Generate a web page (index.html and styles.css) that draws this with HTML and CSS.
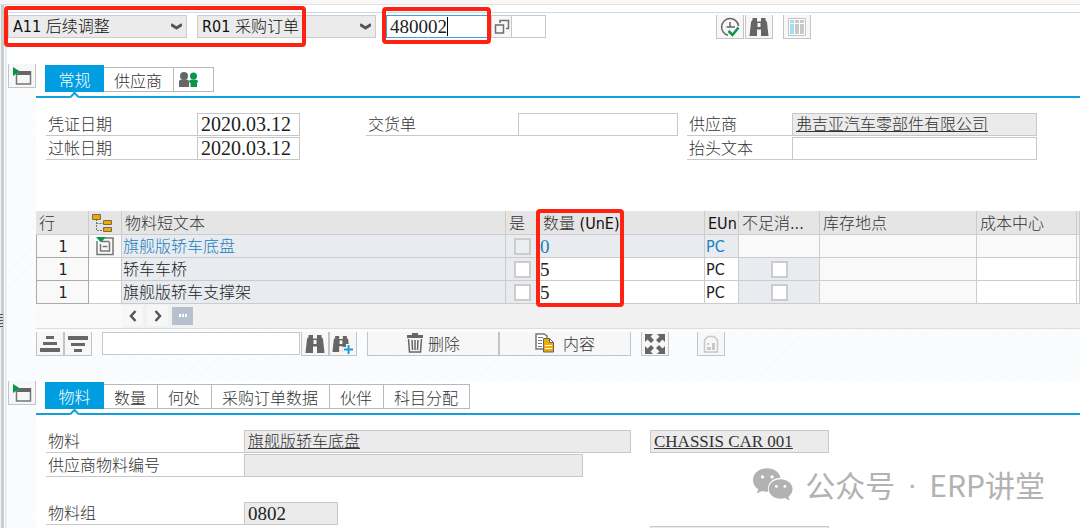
FILE: index.html
```html
<!DOCTYPE html>
<html lang="zh-CN">
<head>
	<meta charset="UTF-8">
	<title>后续调整 采购订单</title>
	<link rel="stylesheet" href="styles.css">
</head>
<body>
	<svg class="symbols" width="0" height="0" aria-hidden="true">
		<symbol id="binoculars" viewBox="0 0 20 20">
			<path fill="#666" d="M3.500 1H8v3.500h4V1h4.500v2l1.500 2 1.500 14H12v-6.500H8V19H.5L2 5l1.500-2z"/>
			<path fill="#f7f7f7" d="M8.500 6h3v4h-3z"/>
		</symbol>
		<symbol id="toggle" viewBox="0 0 22 20">
			<path fill="none" stroke="#777" stroke-width="1.500" d="M5.500 6h14v12h-14z"/>
			<path fill="#666" d="M9 5h11v4H5z"/>
			<path fill="#0a9648" d="M2 1l7 4.500L2 10z"/>
		</symbol>
	</svg>
	<div class="titlebar"></div>
	<div class="frame">
		<div class="splitter"><span class="grip"></span></div>
		<main class="screen">
			<div class="header">
				<select class="action" aria-label="操作"><option>A11 后续调整</option></select>
				<select class="refdoc" aria-label="参考凭证"><option>R01 采购订单</option></select>
				<div class="lookup">
					<input type="text" class="number order" value="480002" aria-label="采购订单">
					<span class="caret"></span>
					<button class="match" aria-label="搜索帮助">
						<svg width="16" height="16" viewBox="0 0 16 16" fill="none" stroke="#707070" stroke-width="1.500"><path d="M1.500 6h8v8h-8zM6 4V1.500h8.500v8H12"/></svg>
					</button>
					<input type="text" class="item" aria-label="项目">
				</div>
				<div class="tools">
					<button class="tool" aria-label="执行">
						<svg width="20" height="20" viewBox="0 0 20 20" fill="none"><path stroke="#666" stroke-width="1.500" d="M18.500 9A8.500 8.500 0 1 0 8 18.300M10 5v5h5M6.500 10H10"/><path stroke="#0a9648" stroke-width="2.500" d="M8.500 14l4 4 6-7.500"/></svg>
					</button>
					<button class="tool" aria-label="查找"><svg width="20" height="20"><use href="#binoculars"/></svg></button>
				</div>
				<button class="tool" aria-label="布局">
					<svg width="20" height="20" viewBox="0 0 20 20"><path fill="#fff" stroke="#c4c4c4" d="M1.500 1.500h17v17h-17z"/><path fill="#a5dcf5" d="M3 3h4v3H3zM3 7h4v10H3z"/><path fill="#c8c8c8" d="M8 3h4v3H8zM8 7h4v10H8zM13 3h4v3h-4zM13 7h4v10h-4z"/></svg>
				</button>
			</div>

			<section class="block">
				<button class="tool" aria-label="折叠抬头"><svg width="22" height="20"><use href="#toggle"/></svg></button>
				<div class="panel overview">
					<div class="tabs">
						<button class="tab active">常规</button>
						<button class="tab">供应商</button>
						<button class="tab people" aria-label="伙伴">
							<svg width="22" height="16" viewBox="0 0 22 16"><g fill="#666"><circle cx="6" cy="4" r="4"/><path d="M1 15V9.500Q1 7.500 4 7.500h4q3 0 3 2V15z"/></g><g fill="#0a9648"><circle cx="15.500" cy="4" r="3.500"/><path d="M12.500 15v-4l-1.500-1q0-2.500 3-2.500h3q3 0 3 2.500l-1 1v4z"/></g></svg>
						</button>
					</div>
					<div class="form">
						<div class="fields dates">
							<label for="docdate">凭证日期</label><input type="text" id="docdate" class="date" value="2020.03.12">
							<label for="postdate">过帐日期</label><input type="text" id="postdate" class="date" value="2020.03.12">
						</div>
						<div class="fields delivery">
							<label for="delivery">交货单</label><input type="text" id="delivery">
						</div>
						<div class="fields vendor">
							<label for="vendor">供应商</label><input type="text" id="vendor" class="link" value="弗吉亚汽车零部件有限公司" readonly>
							<label for="headtext">抬头文本</label><input type="text" id="headtext">
						</div>
					</div>
				</div>
			</section>

			<div class="items">
				<table>
					<colgroup>
						<col class="c-line"><col class="c-tree"><col class="c-text"><col class="c-ok"><col class="c-qty"><col class="c-unit"><col class="c-short"><col class="c-place"><col class="c-cost"><col>
					</colgroup>
					<thead>
						<tr>
							<th>行</th>
							<th class="icon"><svg width="22" height="20" viewBox="0 0 22 20"><path fill="none" stroke="#777" stroke-dasharray="2 1" d="M4.500 6v11.500H11M4.500 10.500H11"/><path fill="#f0ab00" stroke="#7a6a48" d="M.5 1.500h8v5h-8zM11.500 7.500h8v4h-8zM11.500 14.500h8v4h-8z"/></svg></th>
							<th>物料短文本</th>
							<th>是</th>
							<th class="qty">数量 <span>(UnE)</span></th>
							<th><span>EUn</span></th>
							<th>不足消...</th>
							<th>库存地点</th>
							<th>成本中心</th>
							<th></th>
						</tr>
					</thead>
					<tbody>
						<tr class="selected">
							<td class="line">1</td>
							<td class="icon key"><svg width="20" height="20" viewBox="0 0 20 20" fill="none"><path stroke="#777" stroke-width="1.500" d="M2 5v13.500h16V2h-8M14.500 5.500H7M5.500 8v7h9v-9M7.500 10.500h5"/><path fill="#0a9648" d="M1 1h10L6 6.500z"/></svg></td>
							<td class="tint">旗舰版轿车底盘</td>
							<td class="tint check"><input type="checkbox" aria-label="确定" disabled></td>
							<td class="tint num">0</td>
							<td class="tint">PC</td>
							<td class="empty"></td>
							<td class="empty"></td>
							<td class="empty"></td>
							<td class="empty"></td>
						</tr>
						<tr>
							<td class="line">1</td>
							<td></td>
							<td class="tint">轿车车桥</td>
							<td class="tint check"><input type="checkbox" aria-label="确定"></td>
							<td class="num">5</td>
							<td>PC</td>
							<td class="tint center"><input type="checkbox" aria-label="不足消耗"></td>
							<td class="empty"></td>
							<td></td>
							<td></td>
						</tr>
						<tr>
							<td class="line">1</td>
							<td></td>
							<td class="tint">旗舰版轿车支撑架</td>
							<td class="tint check"><input type="checkbox" aria-label="确定"></td>
							<td class="num">5</td>
							<td>PC</td>
							<td class="tint center"><input type="checkbox" aria-label="不足消耗"></td>
							<td class="empty"></td>
							<td></td>
							<td></td>
						</tr>
					</tbody>
				</table>
				<div class="scroll">
					<button aria-label="向左"><svg width="10" height="12" viewBox="0 0 10 12" fill="none" stroke="#555" stroke-width="2.500"><path d="M7.500 1L3 6l4.500 5"/></svg></button>
					<button aria-label="向右"><svg width="10" height="12" viewBox="0 0 10 12" fill="none" stroke="#555" stroke-width="2.500"><path d="M2.500 1L7 6l-4.500 5"/></svg></button>
					<button class="thumb" aria-label="滚动"><svg width="8" height="4" fill="#fff"><path d="M0 0h2v3H0zM3 0h2v3H3zM6 0h2v3H6z"/></svg></button>
				</div>
			</div>

			<div class="actions">
				<div class="tools">
					<button class="tool" aria-label="升序"><svg width="20" height="18" fill="#666"><path d="M6 1h8v3H6zM3 7h14v3H3zM0 13h20v4H0z"/></svg></button>
					<button class="tool" aria-label="降序"><svg width="20" height="18" fill="#666"><path d="M0 1h20v4H0zM3 8h14v3H3zM6 14h8v3H6z"/></svg></button>
				</div>
				<input type="text" class="search" aria-label="搜索">
				<div class="tools">
					<button class="tool" aria-label="查找"><svg width="20" height="20"><use href="#binoculars"/></svg></button>
					<button class="tool" aria-label="继续查找"><svg width="22" height="20"><use href="#binoculars" width="18" height="20"/><path stroke="#f7f7f7" stroke-width="5" d="M11 15.500h11M16.500 10v10"/><path stroke="#1b9de0" stroke-width="2" d="M12 15.500h9M16.500 11v9"/></svg></button>
				</div>
				<div class="tools wide">
					<button class="tool"><svg width="18" height="20" viewBox="0 0 18 20"><path fill="#666" d="M6 0h6v2h5v3H1V2h5z"/><path fill="none" stroke="#666" stroke-width="1.500" d="M2.500 6l1 13h11l1-13M6 7l.5 10M9 7v10M12 7l-.5 10"/></svg>删除</button>
					<button class="tool contents"><svg width="20" height="20" viewBox="0 0 20 20"><path fill="#fff" stroke="#777" stroke-width="1.500" d="M1 1h8l3 2v13H1z"/><path stroke="#777" d="M3 4.500h5M3 7.500h4M3 10.500h4M3 13.500h4"/><path fill="#f0ab00" stroke="#666" d="M8.500 5.500h6l4 4v9.500h-10z"/><path fill="#fff" stroke="#666" d="M14.500 5.500v4h4z"/><path stroke="#fff" d="M10 12.500h7M10 15.500h7"/></svg>内容</button>
				</div>
				<button class="tool" aria-label="全屏"><svg width="20" height="20" viewBox="0 0 20 20"><path fill="#666" d="M0 0h8L5.500 2.500 9 6 6 9 2.500 5.500 0 8zM20 0v8l-2.500-2.500L14 9l-3-3 3.500-3.500L12 0zM0 20v-8l2.500 2.500L6 11l3 3-3.500 3.500L8 20zM20 20h-8l2.500-2.500L11 14l3-3 3.500 3.500L20 12z"/></svg></button>
				<button class="tool batch" aria-label="批次" disabled><svg width="16" height="18" viewBox="0 0 16 18"><path fill="none" stroke="#c8c8c8" stroke-width="1.500" d="M1.500 17V5L5 1.500h6L14.500 5v12z"/><path fill="#c8c8c8" d="M4 8h2v2H4zM4 12h4v3H4zM9 8h3v7H9z"/></svg></button>
			</div>

			<section class="block detail">
				<button class="tool" aria-label="折叠明细"><svg width="22" height="20"><use href="#toggle"/></svg></button>
				<div class="panel">
					<div class="tabs">
						<button class="tab active">物料</button>
						<button class="tab">数量</button>
						<button class="tab">何处</button>
						<button class="tab">采购订单数据</button>
						<button class="tab">伙伴</button>
						<button class="tab">科目分配</button>
					</div>
					<div class="form">
						<div class="fields material">
							<label for="material">物料</label><input type="text" id="material" class="link" value="旗舰版轿车底盘" readonly>
							<label for="vendormat">供应商物料编号</label><input type="text" id="vendormat" class="medium" readonly>
							<span class="blank"></span>
							<label for="group">物料组</label><input type="text" id="group" class="number short" value="0802" readonly>
						</div>
						<div class="fields codes">
							<input type="text" class="link code" value="CHASSIS CAR 001" aria-label="物料编号" readonly>
							<span class="blank"></span>
							<span class="blank"></span>
							<span class="blank"></span>
							<input type="text" aria-label="工厂" readonly>
						</div>
					</div>
				</div>
			</section>
		</main>
	</div>

	<div class="mark mark-type"></div>
	<div class="mark mark-order"></div>
	<div class="mark mark-qty"></div>

	<div class="watermark">
		<svg width="40" height="33" viewBox="0 0 42 34">
			<path fill="#b2b2b2" d="M15 0C6.500 0 0 5.500 0 12.500c0 4 2.200 7.300 5.500 9.500L4 26.500l5.500-2.700c2 .6 4 .9 6.500.7C14 16 21 10 29 10 27.500 4 22 0 15 0z"/>
			<path fill="#b2b2b2" d="M29 11.500c-7 0-12.500 4.600-12.500 10.300S22 32 29 32c1.700 0 3.300-.3 4.700-.8L38.500 34l-1.300-4.200c2.800-2 4.300-4.800 4.300-8 0-5.700-5.500-10.300-12.500-10.300z"/>
			<g fill="#fff"><circle cx="10" cy="9" r="1.800"/><circle cx="20" cy="9" r="1.800"/><circle cx="24.500" cy="19" r="1.500"/><circle cx="33.500" cy="19" r="1.500"/></g>
		</svg>
		<span>公众号</span><span class="dot">·</span><span>ERP讲堂</span>
	</div>
</body>
</html>
```

FILE: styles.css
```css
*{
	box-sizing: border-box;
}
body,button,input,select{
	font-family: "DejaVu Sans Condensed", "Noto Sans CJK SC", sans-serif;
	font-size: 16px;
	font-weight: 300;
	color: #333;
}
body{
	margin: 0;
	height: 100vh;
	display: flex;
	flex-direction: column;
	overflow: hidden;
	background: #fff;
}
svg{
	flex: none;
}
.symbols{
	position: absolute;
}
button,input,select{
	margin: 0;
	padding: 0;
	border-radius: 0;
}
input[type="text"]{
	height: 23px;
	min-width: 0;
	padding: 0 3px;
	border: 1px solid #c8c8c8;
	background: #fff;
	outline: none;
}
input[type="text"][readonly]{
	background: #ebebeb;
}

/* window frame */
.titlebar{
	flex: none;
	height: 5px;
	background: #f7f7f7;
	border-bottom: 1px solid #e2e2e2;
}
.frame{
	flex: 1;
	min-height: 0;
	display: flex;
}
.splitter{
	width: 7px;
	display: flex;
	align-items: center;
	padding-top: 108px;
	background: linear-gradient(to right, #f2f2f2 1px, #ccc 1px, #ccc 4px, #fff 4px, #d4e5f1 6px, #fff);
}
.grip{
	width: 3px;
	height: 14px;
	background: repeating-linear-gradient(#555 0, #555 1px, #ddd 1px, #ddd 3px);
}
.screen{
	flex: 1;
	min-width: 0;
	margin-top: 7px;
	padding-left: 1px;
	border-top: 1px solid #c6dcec;
	background: repeating-linear-gradient(135deg, #f3f9fc 0, #f3f9fc 1px, #fbfdfe 1px, #fbfdfe 3px);
}

/* header bar */
.header{
	height: 51px;
	padding-top: 2px;
	display: flex;
	align-items: flex-start;
	background: #fff;
}
select{
	height: 23px;
	padding-left: 4px;
	border: 1px solid #ccc;
	color: #111;
	appearance: none;
	background: #ebebeb url("data:image/svg+xml,%3Csvg xmlns='http://www.w3.org/2000/svg' width='11' height='7' fill='none' stroke='%23555' stroke-width='3'%3E%3Cpath d='M0 1.500l5.500 3.500L11 1.500'/%3E%3C/svg%3E") no-repeat right 4px center;
}
.action,.refdoc{
	width: 179px;
	margin-right: 10px;
}
.lookup{
	position: relative;
	display: flex;
	margin-right: 170px;
}
.header .order{
	width: 105px;
	border-color: #3da5dc;
}
.caret{
	position: absolute;
	left: 61px;
	top: 2px;
	width: 1px;
	height: 19px;
	background: #000;
}
.number{
	font-family: "Liberation Serif", serif;
	font-size: 19px;
	color: #222;
}
.match{
	width: 21px;
	border: 1px solid #c8c8c8;
	background: #f7f7f7;
	display: flex;
	align-items: center;
	justify-content: center;
}
.header .item{
	width: 34px;
	border-left: 0;
}
.tools{
	display: flex;
	margin-right: 10px;
}
.header .tools{
	gap: 1px;
}
.tool{
	flex: none;
	width: 28px;
	height: 24px;
	border: 1px solid #c4c4c4;
	border-top: 0;
	background: #f7f7f7;
	display: flex;
	align-items: center;
	justify-content: center;
}

/* tab blocks */
.block{
	display: flex;
}
.panel{
	flex: 1;
	min-width: 0;
	background: #fff;
}
.overview{
	padding-bottom: 51px;
}
.tabs{
	position: relative;
	height: 34px;
	padding: 0 0 4px 9px;
	display: flex;
	align-items: flex-end;
	border-bottom: 2px solid #129fdd;
}
.tabs::after{
	content: "";
	position: absolute;
	left: 35px;
	bottom: -4px;
	width: 5px;
	height: 5px;
	border: solid #129fdd;
	border-width: 2px 0 0 2px;
	background: #fff;
	transform: rotate(45deg);
}
.tab{
	height: 25px;
	padding: 0 11px 2px 10px;
	border: 1px solid #b8b8b8;
	border-left: 0;
	background: #fff;
}
.tab.active{
	width: 59px;
	height: 27px;
	padding: 0;
	border: 0;
	background: #009ee0;
	color: #fff;
}
.tab.people{
	width: 40px;
	padding: 0 4px;
	text-align: left;
}
.people svg{
	display: block;
}
.form{
	display: flex;
	padding: 14px 0 0 10px;
}
.fields{
	display: grid;
	grid-auto-rows: 24px;
	align-content: start;
	align-items: end;
}
label{
	height: 23px;
	line-height: 24px;
	padding-left: 2px;
	border-bottom: 1px solid #c8c8c8;
}
.fields .blank{
	grid-column: 1 / -1;
}
.dates{
	grid-template-columns: 151px 103px;
	margin-right: 66px;
}
.delivery{
	grid-template-columns: 152px 160px;
	margin-right: 9px;
}
.vendor{
	grid-template-columns: 105px 245px;
}
.form .date{
	font-family: "Liberation Serif", serif;
	font-size: 20px;
	color: #222;
}
.form .link{
	padding-bottom: 3px;
	text-decoration: underline;
}
.material{
	grid-template-columns: 198px 387px;
	margin-right: 19px;
}
.medium{
	width: 339px;
}
.short{
	width: 94px;
}
.codes{
	grid-template-columns: 179px;
}
.form .code{
	padding-bottom: 0;
	font-family: "Liberation Serif", serif;
	font-size: 17px;
}

/* item table */
.items{
	margin: 0 0 3px 28px;
	background: #f9f9f9;
	border-bottom: 1px solid #ddd;
}
table{
	width: 100%;
	table-layout: fixed;
	border-collapse: separate;
	border-spacing: 0;
	background: #fff;
}
.c-line{ width: 53px; }
.c-tree{ width: 33px; }
.c-text{ width: 384px; }
.c-ok{ width: 32px; }
.c-qty{ width: 167px; }
.c-unit{ width: 34px; }
.c-short{ width: 81px; }
.c-place{ width: 157px; }
.c-cost{ width: 100px; }
th,td{
	height: 23px;
	padding: 2px 0 0 1px;
	line-height: 20px;
	text-align: left;
	font-weight: 300;
	white-space: nowrap;
	overflow: hidden;
	border-right: 1px solid #ccc;
	border-bottom: 1px solid #ccc;
}
th{
	height: 24px;
	padding-left: 3px;
	background: #e5e5e5;
}
tbody td{
	color: #222;
}
th span{
	color: #111;
}
.qty{
	padding-left: 5px;
}
.line{
	text-align: center;
	background: #f9f9f9;
	border: 1px solid #aaa;
	border-top: 0;
}
.icon{
	padding: 0;
	text-align: center;
}
.icon svg{
	display: block;
	margin: 0 auto;
}
th.icon svg{
	margin: 0 3px;
}
.key{
	background: #f9f9f9;
}
.tint{
	background: #e8ecf0;
}
.empty{
	background: #f9f9f9;
}
tbody .selected td{
	color: #2180bd;
}
tbody .selected .line{
	color: #222;
}
.num{
	font-family: "Liberation Serif", serif;
	font-size: 19px;
	padding-left: 2px;
}
.check{
	padding: 0 0 0 8px;
	border-right: 0;
}
.center{
	padding: 0;
	text-align: center;
}
input[type="checkbox"]{
	appearance: none;
	display: block;
	width: 17px;
	height: 17px;
	border: 2px solid #ccc;
	background: #fff;
}
.center input[type="checkbox"]{
	margin: 0 auto;
}
input[type="checkbox"]:disabled{
	background: #ebedef;
}
.scroll{
	height: 24px;
	margin-left: 86px;
	padding: 1px 0 2px;
	display: flex;
	gap: 4px;
	background: #f1f1f1;
}
.scroll button{
	width: 21px;
	border: 0;
	background: #f7f7f7;
	display: flex;
	align-items: center;
	justify-content: center;
}
.scroll .thumb{
	height: 18px;
	margin-top: 2px;
	background: #b7c1cd;
}

/* actions under the table */
.actions{
	display: flex;
	margin-left: 28px;
}
.search{
	width: 198px;
	margin-right: 1px;
}
.wide .tool{
	width: 132px;
	gap: 4px;
	padding-bottom: 2px;
}
.wide .contents{
	gap: 8px;
}
.actions .tools + .tool{
	margin-right: 28px;
}
.detail{
	margin-top: 25px;
}

/* annotations */
.mark{
	position: absolute;
	border: 4px solid #ff2112;
	border-radius: 4px;
}
.mark-type{
	left: 4px;
	top: 6px;
	width: 302px;
	height: 41px;
}
.mark-order{
	left: 382px;
	top: 7px;
	width: 109px;
	height: 37px;
}
.mark-qty{
	left: 536px;
	top: 209px;
	width: 88px;
	height: 98px;
}
.watermark{
	position: absolute;
	right: 35px;
	bottom: 26px;
	display: flex;
	align-items: center;
	gap: 12px;
	font-family: "Noto Sans CJK SC", sans-serif;
	font-size: 30px;
	font-weight: 400;
	line-height: 36px;
	color: #b2b2b2;
}
.dot{
	font-family: "Liberation Sans", sans-serif;
}
```
